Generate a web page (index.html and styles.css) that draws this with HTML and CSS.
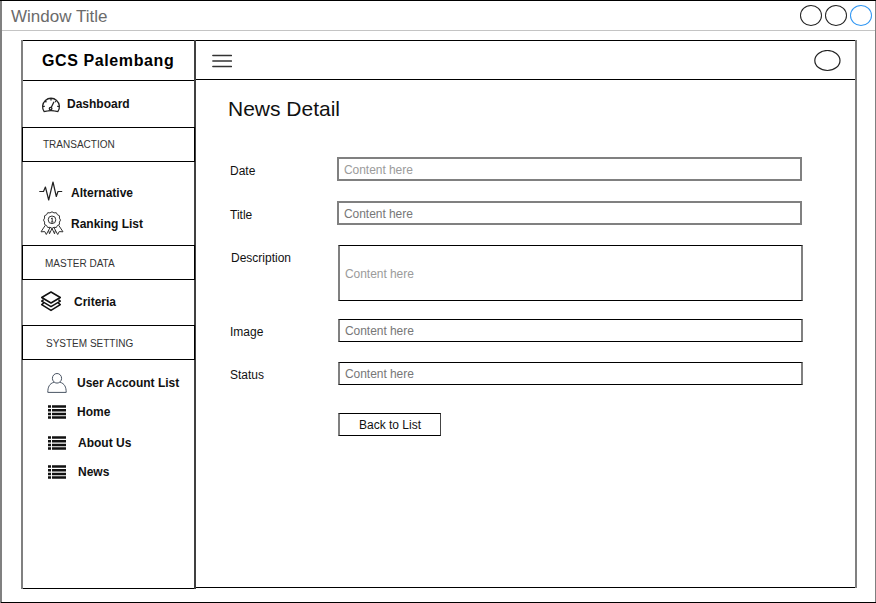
FILE: index.html
```html
<!DOCTYPE html>
<html lang="en">
<head>
<meta charset="utf-8">
<title>News Detail</title>
<link rel="stylesheet" href="styles.css">
</head>
<body>
<svg class="defs" width="0" height="0">
  <symbol id="list" viewBox="0 0 18 14">
    <path d="M0 1.5h3M4 1.5h14M0 5.2h3M4 5.2h14M0 8.9h3M4 8.9h14M0 12.6h3M4 12.6h14" stroke="#111" stroke-width="2.5"/>
  </symbol>
</svg>
<div class="window">
  <header class="titlebar">
    <span class="window-title">Window Title</span>
    <span class="dots"><i class="dot"></i><i class="dot"></i><i class="dot dot-blue"></i></span>
  </header>
  <div class="app">
    <aside class="sidebar">
      <div class="brand">GCS Palembang</div>
      <nav class="group group-dashboard">
        <a class="item dashboard">
          <svg width="20" height="16" viewBox="0 0 20 16" fill="none" stroke="#222" stroke-width="1.3"><path d="M3.2 14.6A8.4 8.4 0 1 1 16.8 14.6L13.2 13.9Q10 13.2 6.8 13.9Z"/><circle cx="9.6" cy="11.6" r="1.3"/><path d="M10.2 10.5L13 4.8M10 1.5v2M4.2 4l1.2 1.2M1.8 9.4h2M16.2 9.4h2M15 4.2l-.8.8"/></svg>
          <span>Dashboard</span>
        </a>
      </nav>
      <h2 class="section transaction">TRANSACTION</h2>
      <nav class="group group-transaction">
        <a class="item alternative">
          <svg width="24" height="20" viewBox="0 0 24 20" fill="none" stroke="#222" stroke-width="1.2" stroke-linejoin="round"><path d="M.3 10.5H4.5L6.4 6L9.7 19L14 1L17.3 15.5L19 10.5H23.2"/></svg>
          <span>Alternative</span>
        </a>
        <a class="item ranking">
          <svg width="24" height="24" viewBox="0 0 24 24" fill="none" stroke="#333" stroke-width="1"><path d="M12 .8l2 1.1 2.3-.2 1.1 2 2.1 1.1-.1 2.3 1.1 2-1.1 2 .1 2.3-2.1 1.1-1.1 2-2.3-.2-2 1.1-2-1.1-2.3.2-1.1-2-2.1-1.1.1-2.3-1.1-2 1.1-2-.1-2.3 2.1-1.1 1.1-2 2.3.2z"/><circle cx="12" cy="8.8" r="3.8"/><path d="M11 7.8L12.2 6.9V11M11 11h2.4M5.3 14.3L1 20.8l3.8-.2 1.5 2.9 3.9-7.2M18.7 14.3l4.3 6.5-3.8-.2-1.5 2.9-3.9-7.2M8.6 19.2l.9 3.6L12 17.4l2.5 5.4.9-3.6"/></svg>
          <span>Ranking List</span>
        </a>
      </nav>
      <h2 class="section master">MASTER DATA</h2>
      <nav class="group group-master">
        <a class="item criteria">
          <svg width="22" height="21" viewBox="0 0 22 21" fill="none" stroke="#111" stroke-width="1.5" stroke-linejoin="round"><path d="M11 1L20.3 6.5L11 12L1.7 6.5Z"/><path d="M3.6 8.6L1.7 10.1L11 15.7L20.3 10.1L18.4 8.6M3.6 12.2L1.7 13.7L11 19.4L20.3 13.7L18.4 12.2"/></svg>
          <span>Criteria</span>
        </a>
      </nav>
      <h2 class="section system">SYSTEM SETTING</h2>
      <nav class="group group-system">
        <a class="item account">
          <svg width="20" height="20" viewBox="0 0 20 20" fill="none" stroke="#4a5564" stroke-width="1"><ellipse cx="10" cy="5.3" rx="4.6" ry="4.8"/><path d="M6.9 9.3C2.5 10.5.8 14 .8 19.4H19.2C19.2 14 17.5 10.5 13.1 9.3"/></svg>
          <span>User Account List</span>
        </a>
        <a class="item home"><svg width="18" height="14"><use href="#list"/></svg><span>Home</span></a>
        <a class="item about"><svg width="18" height="14"><use href="#list"/></svg><span>About Us</span></a>
        <a class="item news"><svg width="18" height="14"><use href="#list"/></svg><span>News</span></a>
      </nav>
    </aside>
    <main class="main">
      <div class="topbar">
        <svg width="20" height="14" viewBox="0 0 20 14" fill="none" stroke="#333" stroke-width="1.6" stroke-linecap="round"><path d="M.9 1.5h18.4M.9 7h18.4M.9 12.5h18.4"/></svg>
        <svg width="28" height="22" viewBox="0 0 28 22" fill="none" stroke="#222" stroke-width="1.2"><ellipse cx="13.4" cy="10.5" rx="12.6" ry="10"/></svg>
      </div>
      <div class="content">
        <h1 class="heading">News Detail</h1>
        <form class="form">
          <div class="row date"><label>Date</label><div class="field thick light">Content here</div></div>
          <div class="row title"><label>Title</label><div class="field thick">Content here</div></div>
          <div class="row description"><label>Description</label><div class="field tall light">Content here</div></div>
          <div class="row image"><label>Image</label><div class="field">Content here</div></div>
          <div class="row status"><label>Status</label><div class="field">Content here</div></div>
          <button class="back" type="button">Back to List</button>
        </form>
      </div>
    </main>
  </div>
</div>
</body>
</html>
```

FILE: styles.css
```css
* { box-sizing: border-box; }
body {
  margin: 0;
  background: #fff;
  font-family: "Liberation Sans", Arial, sans-serif;
  font-size: 12px;
  color: #111;
}
h1, h2 { margin: 0; font-weight: 400; }
svg { display: block; flex: none; }
.defs { display: none; }

.window {
  width: 876px;
  height: 603px;
  background:
    linear-gradient(#000, #000) 0 0 / 100% 1px no-repeat,
    linear-gradient(#000, #000) 1px 100% / 100% 1px no-repeat,
    linear-gradient(#808080, #808080) 0 0 / 2px 100% no-repeat,
    linear-gradient(#808080, #808080) 100% 0 / 1px 100% no-repeat;
  padding: 1px 1px 1px 2px;
}
.titlebar {
  height: 30px;
  border-bottom: 1px solid #c4c4c4;
  display: flex;
  justify-content: space-between;
  padding: 0 3px 0 9px;
}
.window-title {
  font-size: 17px;
  line-height: 31px;
  letter-spacing: 0;
  color: #6b6b6b;
}
.dots { display: flex; gap: 3px; padding-top: 4px; }
.dot {
  width: 22px;
  height: 21px;
  border: 1px solid #222;
  border-radius: 50%;
}
.dot-blue { border-color: #2f96f3; }

.app {
  display: grid;
  grid-template-columns: 175px 661px;
  align-items: start;
  margin: 9px 0 0 19px;
}
.sidebar, .main {
  border: solid #808080;
  background:
    linear-gradient(#000, #000) 0 0 / 100% 1px no-repeat border-box,
    linear-gradient(#000, #000) 0 100% / 100% 1px no-repeat border-box;
}
.sidebar {
  height: 549px;
  border-width: 0 2px;
  border-right-color: #404040;
  padding-top: 1px;
}
.brand {
  height: 40px;
  border-bottom: 1px solid #000;
  padding-left: 19px;
  font-weight: 700;
  font-size: 16px;
  line-height: 39px;
  letter-spacing: .6px;
  color: #000;
}
.group { display: flex; flex-direction: column; align-items: flex-start; }
.item {
  display: flex;
  align-items: flex-start;
  font-weight: 700;
  line-height: 14px;
  white-space: nowrap;
}
.section {
  height: 35px;
  margin: 0 -1px;
  border: 1px solid #000;
  font-size: 10px;
  line-height: 33px;
  color: #333;
}
.transaction { padding-left: 20px; }
.master { padding-left: 22px; line-height: 35px; }
.system { padding-left: 23px; line-height: 35px; }

.group-dashboard { height: 46px; padding: 16px 0 0 18px; }
.dashboard { gap: 6px; }
.group-transaction { height: 83px; padding: 19px 0 0 16px; gap: 10px; }
.alternative { gap: 8px; height: 20px; }
.alternative span { padding-top: 5px; }
.ranking { gap: 7px; padding-left: 1px; }
.ranking span { padding-top: 6px; }
.group-master { height: 45px; padding: 11px 0 0 17px; }
.criteria { gap: 12px; }
.criteria span { padding-top: 4px; }
.group-system { padding: 13px 0 0 24px; }
.account { gap: 10px; height: 32px; }
.account span { padding-top: 3px; }
.home { gap: 11px; padding-left: 1px; height: 31px; }
.about { gap: 12px; padding-left: 1px; height: 29px; }
.news { gap: 12px; padding-left: 1px; }

.main {
  height: 548px;
  border-width: 0 2px 0 0;
}
.topbar {
  height: 40px;
  border-bottom: 1px solid #000;
  display: flex;
  justify-content: space-between;
  padding: 0 13px 0 16px;
}
.topbar svg:first-child { margin-top: 14px; }
.topbar svg:last-child { margin-top: 10px; }
.content { padding: 16px 0 0 32px; }
.heading {
  font-size: 21px;
  line-height: 26px;
  height: 61px;
}
.form { display: flex; flex-direction: column; }
.row {
  display: grid;
  grid-template-columns: 110px 465px;
  align-items: start;
}
.row label { padding: 7px 0 0 2px; line-height: 14px; }
.field {
  height: 23px;
  border: solid;
  border-width: 1px 2px;
  border-color: #000 #808080;
  padding-left: 5px;
  line-height: 14px;
  letter-spacing: -.05px;
  display: flex;
  align-items: center;
  color: #777;
}
.thick { height: 24px; border: 2px solid #808080; padding-top: 2px; }
.light { color: #9b9b9b; }
.tall { height: 56px; padding-top: 2px; }
.date, .title { grid-template-columns: 109px 465px; height: 44px; }
.description { height: 74px; }
.description label { padding: 6px 0 0 3px; }
.image { height: 43px; }
.image label, .status label { padding-top: 6px; }
.status { height: 51px; }
.back {
  width: 103px;
  height: 23px;
  margin-left: 110px;
  padding: 0;
  border: solid;
  border-width: 1px 1px 1px 2px;
  border-color: #000 #444 #000 #808080;
  background: #fff;
  font: inherit;
  color: #111;
}
```
